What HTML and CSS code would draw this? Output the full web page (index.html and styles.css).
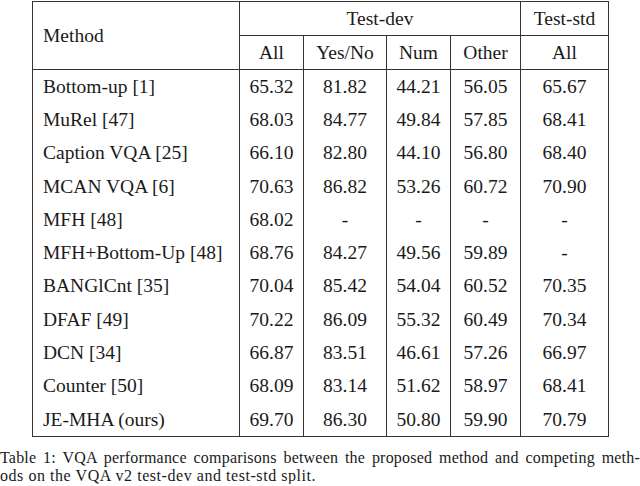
FILE: index.html
```html
<!DOCTYPE html>
<html>
<head>
<meta charset="utf-8">
<link rel="stylesheet" href="styles.css">
</head>
<body>
<div class="page">
<table class="results">
  <colgroup>
    <col class="c-method"><col class="c-all"><col class="c-yn"><col class="c-num"><col class="c-other"><col class="c-std">
  </colgroup>
  <thead>
    <tr class="h1">
      <th rowspan="2" class="method">Method</th>
      <th colspan="4" class="group">Test-dev</th>
      <th class="group">Test-std</th>
    </tr>
    <tr class="h2">
      <th>All</th><th>Yes/No</th><th>Num</th><th>Other</th><th>All</th>
    </tr>
  </thead>
  <tbody>
    <tr class="first"><td class="method">Bottom-up [1]</td><td>65.32</td><td>81.82</td><td>44.21</td><td>56.05</td><td>65.67</td></tr>
    <tr><td class="method">MuRel [47]</td><td>68.03</td><td>84.77</td><td>49.84</td><td>57.85</td><td>68.41</td></tr>
    <tr><td class="method">Caption VQA [25]</td><td>66.10</td><td>82.80</td><td>44.10</td><td>56.80</td><td>68.40</td></tr>
    <tr><td class="method">MCAN VQA [6]</td><td>70.63</td><td>86.82</td><td>53.26</td><td>60.72</td><td>70.90</td></tr>
    <tr><td class="method">MFH [48]</td><td>68.02</td><td>-</td><td>-</td><td>-</td><td>-</td></tr>
    <tr><td class="method">MFH+Bottom-Up [48]</td><td>68.76</td><td>84.27</td><td>49.56</td><td>59.89</td><td>-</td></tr>
    <tr><td class="method">BANGlCnt [35]</td><td>70.04</td><td>85.42</td><td>54.04</td><td>60.52</td><td>70.35</td></tr>
    <tr><td class="method">DFAF [49]</td><td>70.22</td><td>86.09</td><td>55.32</td><td>60.49</td><td>70.34</td></tr>
    <tr><td class="method">DCN [34]</td><td>66.87</td><td>83.51</td><td>46.61</td><td>57.26</td><td>66.97</td></tr>
    <tr><td class="method">Counter [50]</td><td>68.09</td><td>83.14</td><td>51.62</td><td>58.97</td><td>68.41</td></tr>
    <tr class="last"><td class="method">JE-MHA (ours)</td><td>69.70</td><td>86.30</td><td>50.80</td><td>59.90</td><td>70.79</td></tr>
  </tbody>
</table>
<div class="caption">
  <div class="cap-line1">Table 1: VQA performance comparisons between the proposed method and competing meth-</div>
  <div class="cap-line2">ods on the VQA v2 test-dev and test-std split.</div>
</div>
</div>
</body>
</html>
```
FILE: styles.css
```css
html, body {
  margin: 0;
  padding: 0;
  background: #ffffff;
}
.page {
  width: 640px;
  padding-top: 1px;
  font-family: "Liberation Serif", "DejaVu Serif", serif;
  color: #1a1a1a;
}
.results {
  border-collapse: collapse;
  margin-left: 32px;
  width: 577px;
  table-layout: fixed;
  font-size: 19.5px;
}
.c-method { width: 207px; }
.c-all { width: 64px; }
.c-yn { width: 83px; }
.c-num { width: 64px; }
.c-other { width: 70px; }
.c-std { width: 88px; }

.results th, .results td {
  font-weight: normal;
  text-align: center;
  padding: 0;
  white-space: nowrap;
  border-left: 1px solid #333;
  border-right: 1px solid #333;
}
.results .method {
  text-align: left;
  padding-left: 10px;
}
.results thead tr.h1 th {
  height: 33px;
  border-top: 1px solid #333;
}
.results thead tr.h1 th.group {
  border-bottom: 1px solid #333;
}
.results thead tr.h2 th {
  height: 33px;
  border-bottom: 1px solid #333;
}
.results thead th.method {
  border-bottom: 1px solid #333;
}
.results tbody td {
  height: 33.3px;
}
.results tbody tr.last td {
  border-bottom: 1px solid #333;
}
.caption {
  margin-top: 12px;
  font-size: 16px;
  line-height: 17.5px;
  letter-spacing: 0.55px;
}
.cap-line1 {
  text-align: justify;
  text-align-last: justify;
  letter-spacing: 0.2px;
}
.cap-line2 {
  text-align: left;
}
```
